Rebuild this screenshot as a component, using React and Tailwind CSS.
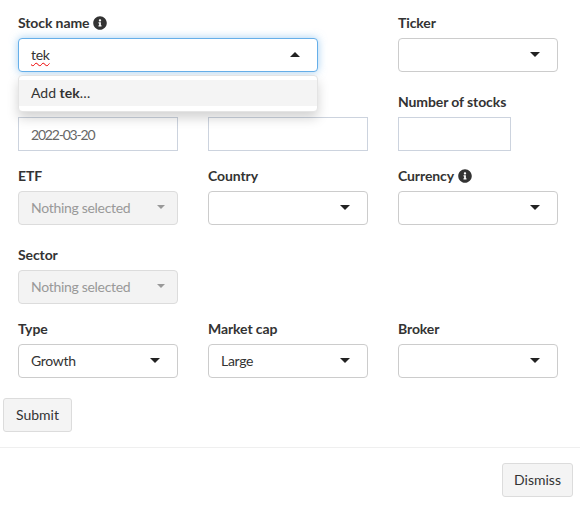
function Info() {
  return (
    <svg viewBox="0 0 512 512" className="w-[14px] h-[14px] ml-[4px] mt-[1px] fill-[#333]">
      <path d="M256 8C119 8 8 119 8 256s111 248 248 248 248-111 248-248S393 8 256 8zm0 110c23 0 42 19 42 42s-19 42-42 42-42-19-42-42 19-42 42-42zm56 254c0 7-5 12-12 12h-88c-7 0-12-5-12-12v-24c0-7 5-12 12-12h12v-64h-12c-7 0-12-5-12-12v-24c0-7 5-12 12-12h64c7 0 12 5 12 12v100h12c7 0 12 5 12 12v24z" />
    </svg>
  );
}
function Label({ children, info }) {
  return (
    <div className="h-[19px] mb-[6px] flex items-center font-bold text-[14px] tracking-[-0.1px] text-[#333]">
      {children}
      {info && <Info />}
    </div>
  );
}
function Caret({ up, muted }) {
  return (
    <span
      className={
        "w-0 h-0 mb-[2px] " +
        (up
          ? "border-x-[5px] border-x-transparent border-b-[5px] border-b-[#222]"
          : muted
          ? "border-x-[4px] border-x-transparent border-t-[4px] border-t-[#999]"
          : "border-x-[5px] border-x-transparent border-t-[5px] border-t-[#222]")
      }
    />
  );
}
function Select({ value, open, disabled, className = "" }) {
  let cls = "h-[34px] flex items-center justify-between pl-[12px] rounded-[4px] border text-[14px] tracking-[-0.3px] " + className + " ";
  if (open) cls += "border-[#66afe9] bg-white pr-[17px] shadow-[0_0_8px_rgba(102,175,233,0.6)] ";
  else if (disabled) cls += "border-[#dcdcdc] bg-[#f3f3f3] text-[#999] pr-[12px] ";
  else cls += "border-[#ccc] bg-white text-[#333] pr-[17px] ";
  return (
    <div className={cls}>
      <span className={"pb-[2px] " + (open ? "underline decoration-wavy decoration-[#e00] decoration-1 underline-offset-2" : "")}>{value}</span>
      <Caret up={open} muted={disabled} />
    </div>
  );
}
function TextBox({ value, className = "" }) {
  return (
    <div className={"h-[34px] flex items-center px-[12px] border border-[#ccd3de] text-[14px] tracking-[-1.2px] text-[#666] " + className}>
      {value}
    </div>
  );
}
function Btn({ children, className = "" }) {
  return (
    <div className={"h-[34px] flex items-center justify-center pb-[2px] rounded-[3px] border border-[#dcdcdc] bg-[#f4f4f4] text-[14px] text-[#333] " + className}>
      {children}
    </div>
  );
}
function Row({ className = "", children }) {
  return <div className={"grid grid-cols-[160px_160px_160px] gap-x-[30px] " + className}>{children}</div>;
}
export default function App() {
  return (
    <div className="relative w-[580px] h-[506px] bg-white overflow-hidden text-[#333]" style={{ fontFamily: 'Lato,"Open Sans",sans-serif' }}>
      <div className="pt-[13px] px-[18px]">
        <Row>
          <div className="relative col-span-2">
            <Label info>Stock name</Label>
            <Select value="tek" open className="w-[300px]" />
            <div className="absolute left-0 top-[62px] w-[300px] h-[37px] py-[4px] z-10 bg-white rounded-[4px] border border-[#e4e4e4] shadow-[0_6px_12px_rgba(0,0,0,0.175)]">
              <div className="h-[26px] flex items-center px-[12px] pb-[2px] bg-[#f4f4f4] text-[14px]">
                Add&nbsp;<b className="font-bold">tek</b>…
              </div>
            </div>
          </div>
          <div>
            <Label>Ticker</Label>
            <Select />
          </div>
        </Row>
        <Row className="mt-[20px]">
          <div>
            <Label />
            <TextBox value="2022-03-20" />
          </div>
          <div>
            <Label />
            <TextBox />
          </div>
          <div>
            <Label>Number of stocks</Label>
            <TextBox className="w-[113px]" />
          </div>
        </Row>
        <Row className="mt-[15px]">
          <div>
            <Label>ETF</Label>
            <Select value="Nothing selected" disabled />
          </div>
          <div>
            <Label>Country</Label>
            <Select />
          </div>
          <div>
            <Label info>Currency</Label>
            <Select />
          </div>
        </Row>
        <Row className="mt-[20px]">
          <div>
            <Label>Sector</Label>
            <Select value="Nothing selected" disabled />
          </div>
        </Row>
        <Row className="mt-[15px]">
          <div>
            <Label>Type</Label>
            <Select value="Growth" />
          </div>
          <div>
            <Label>Market cap</Label>
            <Select value="Large" />
          </div>
          <div>
            <Label>Broker</Label>
            <Select />
          </div>
        </Row>
      </div>
      <div className="pl-[3px] pt-[20px] flex">
        <Btn className="w-[69px]">Submit</Btn>
      </div>
      <div className="mt-[15px] border-t border-[#efefef] pt-[15px] pr-[7px] flex justify-end">
        <Btn className="w-[71px]">Dismiss</Btn>
      </div>
    </div>
  );
}
